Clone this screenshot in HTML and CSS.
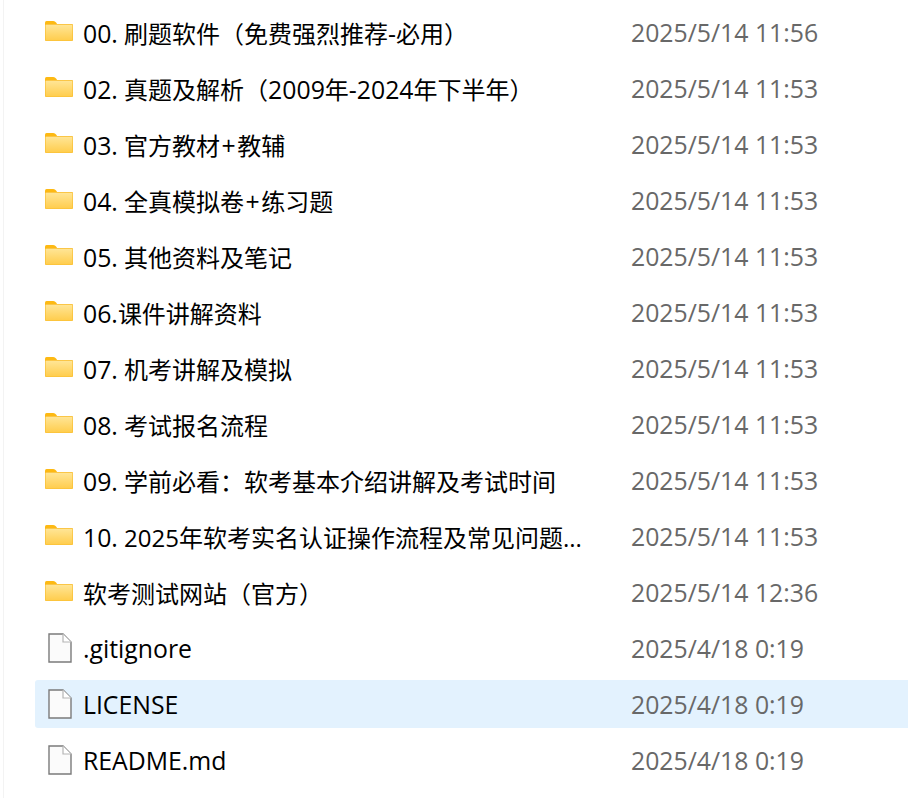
FILE: index.html
```html
<!DOCTYPE html>
<html>
  <head>
    <meta charset="utf-8" />
    <link rel="stylesheet" href="styles.css">
  </head>
  <body>
    <svg class="sprites" width="0" height="0">
      <defs>
        <linearGradient id="folderFill" x1="0" y1="0" x2="0" y2="1">
          <stop offset="0" stop-color="#ffe596" />
          <stop offset="1" stop-color="#ffcd4d" />
        </linearGradient>
        <symbol id="folder" viewBox="0 0 28 24">
          <path d="M0 3.5Q0 2 1.5 2H8Q9.5 2 10.5 3L12 4.5V7H0Z" fill="#fdb913" />
          <rect x="0" y="5" width="28" height="17" rx="1" fill="#f9bc2c" />
          <rect x="0.6" y="5.8" width="26.8" height="15.6" rx="0.6" fill="url(#folderFill)" />
        </symbol>
        <symbol id="file" viewBox="0 0 24 30">
          <path d="M1 1H15L23 9V29H1Z" fill="#fbfbfb" stroke="#7b7b7b" stroke-width="1.4" />
          <path d="M15 1V9H23" fill="#fff" stroke="#b5b5b5" stroke-width="1.2" />
        </symbol>
      </defs>
    </svg>
    <div class="list">
      <div class="row">
        <svg class="icon folder"><use href="#folder" /></svg>
        <span class="name"><span class="lat">00.</span> 刷题软件（免费强烈推荐<span class="lat">-</span>必用）</span>
        <span class="date">2025/5/14 11:56</span>
      </div>
      <div class="row">
        <svg class="icon folder"><use href="#folder" /></svg>
        <span class="name"><span class="lat">02.</span> 真题及解析（<span class="lat">2009</span>年<span class="lat">-2024</span>年下半年）</span>
        <span class="date">2025/5/14 11:53</span>
      </div>
      <div class="row">
        <svg class="icon folder"><use href="#folder" /></svg>
        <span class="name"><span class="lat">03.</span> 官方教材<span class="plus">+</span>教辅</span>
        <span class="date">2025/5/14 11:53</span>
      </div>
      <div class="row">
        <svg class="icon folder"><use href="#folder" /></svg>
        <span class="name"><span class="lat">04.</span> 全真模拟卷<span class="plus">+</span>练习题</span>
        <span class="date">2025/5/14 11:53</span>
      </div>
      <div class="row">
        <svg class="icon folder"><use href="#folder" /></svg>
        <span class="name"><span class="lat">05.</span> 其他资料及笔记</span>
        <span class="date">2025/5/14 11:53</span>
      </div>
      <div class="row">
        <svg class="icon folder"><use href="#folder" /></svg>
        <span class="name"><span class="lat">06.</span>课件讲解资料</span>
        <span class="date">2025/5/14 11:53</span>
      </div>
      <div class="row">
        <svg class="icon folder"><use href="#folder" /></svg>
        <span class="name"><span class="lat">07.</span> 机考讲解及模拟</span>
        <span class="date">2025/5/14 11:53</span>
      </div>
      <div class="row">
        <svg class="icon folder"><use href="#folder" /></svg>
        <span class="name"><span class="lat">08.</span> 考试报名流程</span>
        <span class="date">2025/5/14 11:53</span>
      </div>
      <div class="row">
        <svg class="icon folder"><use href="#folder" /></svg>
        <span class="name"><span class="lat">09.</span> 学前必看：软考基本介绍讲解及考试时间</span>
        <span class="date">2025/5/14 11:53</span>
      </div>
      <div class="row">
        <svg class="icon folder"><use href="#folder" /></svg>
        <span class="name"><span class="lat">10.</span> 2025年软考实名认证操作流程及常见问题...</span>
        <span class="date">2025/5/14 11:53</span>
      </div>
      <div class="row">
        <svg class="icon folder"><use href="#folder" /></svg>
        <span class="name">软考测试网站（官方）</span>
        <span class="date">2025/5/14 12:36</span>
      </div>
      <div class="row">
        <svg class="icon file"><use href="#file" /></svg>
        <span class="name lat">.gitignore</span>
        <span class="date">2025/4/18 0:19</span>
      </div>
      <div class="row selected">
        <svg class="icon file"><use href="#file" /></svg>
        <span class="name lat">LICENSE</span>
        <span class="date">2025/4/18 0:19</span>
      </div>
      <div class="row">
        <svg class="icon file"><use href="#file" /></svg>
        <span class="name lat">README.md</span>
        <span class="date">2025/4/18 0:19</span>
      </div>
    </div>
  </body>
</html>
```

FILE: styles.css
```css
html, body {
  height: 100%;
}
body {
  margin: 0;
  background-color: white;
  font-family: "Open Sans", "Noto Sans CJK SC", sans-serif;
  font-size: 24px;
  overflow: hidden;
}
.sprites {
  display: block;
}
.list {
  display: flex;
  flex-direction: column;
  gap: 8px;
  height: 100%;
  box-sizing: border-box;
  margin-left: 3px;
  padding: 8px 0 0 31px;
  border-left: 1px solid #f3f3f3;
}
.row {
  display: flex;
  align-items: center;
  height: 48px;
  flex: none;
  border-radius: 3px 0 0 3px;
}
.selected {
  background-color: #e3f2fe;
}
.icon {
  flex: none;
}
.icon.folder {
  width: 28px;
  height: 24px;
  margin: 0 10px 2px 10px;
}
.icon.file {
  width: 24px;
  height: 30px;
  margin: 0 11px 0 13px;
}
.name {
  width: 548px;
  flex: none;
  color: black;
  white-space: nowrap;
}
.lat {
  font-size: 24.8px;
}
.plus {
  padding: 0 1.5px;
  font-size: 24.8px;
}
.date {
  color: #686868;
  font-size: 24.8px;
  white-space: nowrap;
}
```
